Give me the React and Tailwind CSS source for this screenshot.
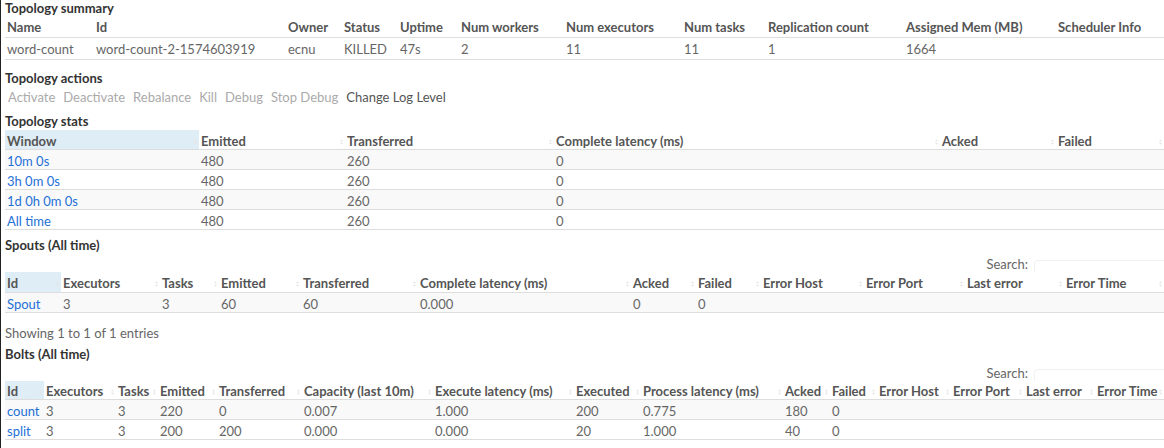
import React from 'react';

const FONT = "font-['Lato','Liberation_Sans',sans-serif]";

function SortIcon() {
  return (
    <svg width="3" height="6" viewBox="0 0 4 7" className="shrink-0">
      <path d="M2 0 L4 2.5 L0 2.5 Z" fill="#e2e2e2" />
      <path d="M2 7 L4 4.5 L0 4.5 Z" fill="#e2e2e2" />
    </svg>
  );
}

function Heading({ children, className = 'leading-[21px]' }) {
  return <div className={`h-[18px] font-bold text-[#333] ${className}`}>{children}</div>;
}

function DataTable({
  cols,
  headers,
  rows,
  headH,
  rowH,
  headPad = 'pt-[4px]',
  rowPad = 'pt-[4px]',
  sortable = false,
  linkFirst = false,
  striped = true,
}) {
  return (
    <div>
      <div className={`flex ${headH} border-b border-[#ddd]`}>
        {headers.map((h, i) => (
          <div
            key={h}
            className={`${cols[i]} ${headPad} shrink-0 flex items-center justify-between pl-[2px] pr-[2px] font-bold text-[#555] whitespace-nowrap ${
              sortable && i === 0 ? 'bg-[#dfedf6]' : ''
            }`}
          >
            <span>{h}</span>
            {sortable && <SortIcon />}
          </div>
        ))}
      </div>
      {rows.map((r, ri) => (
        <div
          key={ri}
          className={`flex ${rowH} border-b border-[#ddd] ${striped && ri % 2 === 0 ? 'bg-[#f9f9f9]' : 'bg-white'}`}
        >
          {headers.map((h, i) => (
            <div
              key={h}
              className={`${cols[i]} ${rowPad} shrink-0 flex items-center pl-[2px] whitespace-nowrap ${
                linkFirst && i === 0 ? 'text-[#2470d6]' : 'text-[#666]'
              }`}
            >
              {r[i] ?? ''}
            </div>
          ))}
        </div>
      ))}
    </div>
  );
}

function Search() {
  return (
    <div className="flex justify-end items-start h-[19px] overflow-hidden">
      <span className="mt-[2px] text-[#666]">Search:</span>
      <div className="ml-[6px] mr-[-20px] mt-[7px] w-[150px] h-[24px] shrink-0 border border-[#f0f0f0] rounded-sm" />
    </div>
  );
}

const summaryCols = ['w-[89px]', 'w-[192px]', 'w-[56px]', 'w-[56px]', 'w-[61px]', 'w-[105px]', 'w-[118px]', 'w-[84px]', 'w-[138px]', 'w-[152px]', 'w-[108px]'];
const summaryHeaders = ['Name', 'Id', 'Owner', 'Status', 'Uptime', 'Num workers', 'Num executors', 'Num tasks', 'Replication count', 'Assigned Mem (MB)', 'Scheduler Info'];
const summaryRows = [['word-count', 'word-count-2-1574603919', 'ecnu', 'KILLED', '47s', '2', '11', '11', '1', '1664', '']];

const statsCols = ['w-[194px]', 'w-[146px]', 'w-[209px]', 'w-[386px]', 'w-[116px]', 'w-[108px]'];
const statsHeaders = ['Window', 'Emitted', 'Transferred', 'Complete latency (ms)', 'Acked', 'Failed'];
const statsRows = [
  ['10m 0s', '480', '260', '0'],
  ['3h 0m 0s', '480', '260', '0'],
  ['1d 0h 0m 0s', '480', '260', '0'],
  ['All time', '480', '260', '0'],
];

const spoutCols = ['w-[56px]', 'w-[99px]', 'w-[59px]', 'w-[82px]', 'w-[117px]', 'w-[213px]', 'w-[65px]', 'w-[65px]', 'w-[103px]', 'w-[101px]', 'w-[99px]', 'w-[100px]'];
const spoutHeaders = ['Id', 'Executors', 'Tasks', 'Emitted', 'Transferred', 'Complete latency (ms)', 'Acked', 'Failed', 'Error Host', 'Error Port', 'Last error', 'Error Time'];
const spoutRows = [['Spout', '3', '3', '60', '60', '0.000', '0', '0']];

const boltCols = ['w-[39px]', 'w-[72px]', 'w-[42px]', 'w-[59px]', 'w-[85px]', 'w-[131px]', 'w-[141px]', 'w-[67px]', 'w-[142px]', 'w-[47px]', 'w-[47px]', 'w-[74px]', 'w-[73px]', 'w-[71px]', 'w-[69px]'];
const boltHeaders = ['Id', 'Executors', 'Tasks', 'Emitted', 'Transferred', 'Capacity (last 10m)', 'Execute latency (ms)', 'Executed', 'Process latency (ms)', 'Acked', 'Failed', 'Error Host', 'Error Port', 'Last error', 'Error Time'];
const boltRows = [
  ['count', '3', '3', '220', '0', '0.007', '1.000', '200', '0.775', '180', '0'],
  ['split', '3', '3', '200', '200', '0.000', '0.000', '20', '1.000', '40', '0'],
];

const actions = [
  ['Activate', false],
  ['Deactivate', false],
  ['Rebalance', false],
  ['Kill', false],
  ['Debug', false],
  ['Stop Debug', false],
  ['Change Log Level', true],
];

export default function App() {
  return (
    <div className={`${FONT} text-[13px] bg-white min-h-[448px] w-[1164px] overflow-hidden border-l border-[#222] pl-[4px]`}>
      <Heading className="leading-[17px]">Topology summary</Heading>
      <DataTable
        cols={summaryCols}
        headers={summaryHeaders}
        rows={summaryRows}
        headH="h-[20px]"
        rowH="h-[22px]"
        headPad="pt-0"
        rowPad="pt-[2px]"
        striped={false}
      />

      <Heading className="mt-[8px] leading-[20px]">Topology actions</Heading>
      <div className="flex h-[20px] items-center pt-[4px] gap-[8px] pl-[3px]">
        {actions.map(([label, on]) => (
          <span key={label} className={on ? 'text-[#555]' : 'text-[#aaa]'}>
            {label}
          </span>
        ))}
      </div>

      <Heading className="mt-[5px] leading-[21px]">Topology stats</Heading>
      <div className="mt-px">
        <DataTable cols={statsCols} headers={statsHeaders} rows={statsRows} headH="h-[20px]" rowH="h-[20px]" sortable linkFirst />
      </div>

      <Heading className="mt-[5px] leading-[21px]">Spouts (All time)</Heading>
      <Search />
      <DataTable cols={spoutCols} headers={spoutHeaders} rows={spoutRows} headH="h-[21px]" rowH="h-[20px]" sortable linkFirst />
      <div className="mt-[10px] h-[18px] leading-[21px] text-[#666]">Showing 1 to 1 of 1 entries</div>

      <Heading className="mt-[3px] leading-[20px]">Bolts (All time)</Heading>
      <Search />
      <DataTable cols={boltCols} headers={boltHeaders} rows={boltRows} headH="h-[19px]" rowH="h-[20px]" sortable linkFirst />
    </div>
  );
}
